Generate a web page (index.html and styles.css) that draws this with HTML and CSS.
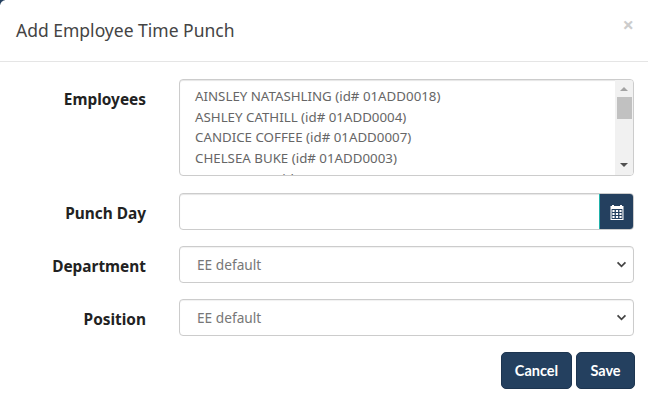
FILE: index.html
```html
<!DOCTYPE html>
<html lang="en">

<head>
    <meta charset="UTF-8">
    <meta name="viewport" content="width=device-width, initial-scale=1.0">
    <title>Add Employee Time Punch</title>
    <link rel="stylesheet" href="styles.css">
</head>

<body>
    <div class="modal">
        <div class="modal-header">
            <h4>Add Employee Time Punch</h4>
            <span class="close">&times;</span>
        </div>
        <form class="modal-body">
            <div class="row row-list">
                <label>Employees</label>
                <div class="list-box">
                    <div class="list-items">
                        <div>AINSLEY NATASHLING (id# 01ADD0018)</div>
                        <div>ASHLEY CATHILL (id# 01ADD0004)</div>
                        <div>CANDICE COFFEE (id# 01ADD0007)</div>
                        <div>CHELSEA BUKE (id# 01ADD0003)</div>
                        <div>JANE DALLEY (id# 01ADD0002)</div>
                    </div>
                    <div class="scrollbar">
                        <span class="arrow-up"></span>
                        <span class="thumb"></span>
                        <span class="arrow-down"></span>
                    </div>
                </div>
            </div>
            <div class="row">
                <label>Punch Day</label>
                <div class="date-group">
                    <div class="date-input"></div>
                    <div class="date-btn">
                        <svg width="14" height="16" viewBox="0 0 14 16">
                            <path fill="#fff" d="M2 1h2v1h6V1h2v1h1.5v14H.5V2H2z"/>
                            <path fill="#24405f" d="M1.6 5h10.8v9.9H1.6z"/>
                            <path fill="#fff" d="M2.4 6h2.2v2H2.4zM5.9 6h2.2v2H5.9zM9.4 6h2.2v2H9.4zM2.4 9h2.2v2H2.4zM5.9 9h2.2v2H5.9zM9.4 9h2.2v2H9.4zM2.4 12h2.2v2H2.4zM5.9 12h2.2v2H5.9zM9.4 12h2.2v2H9.4z"/>
                        </svg>
                    </div>
                </div>
            </div>
            <div class="row">
                <label>Department</label>
                <div class="select-box">
                    <span>EE default</span>
                    <svg width="11" height="7" viewBox="0 0 12 8"><path fill="none" stroke="#444" stroke-width="2" d="M1.5 1.5 6 6l4.5-4.5"/></svg>
                </div>
            </div>
            <div class="row">
                <label>Position</label>
                <div class="select-box">
                    <span>EE default</span>
                    <svg width="11" height="7" viewBox="0 0 12 8"><path fill="none" stroke="#444" stroke-width="2" d="M1.5 1.5 6 6l4.5-4.5"/></svg>
                </div>
            </div>
            <div class="actions">
                <button type="button" class="btn-cancel">Cancel</button>
                <button type="button" class="btn-save">Save</button>
            </div>
        </form>
    </div>
</body>

</html>
```

FILE: styles.css
```css
html,
body {
    height: 100%;
}

body {
    margin: 0;
    padding: 0;
    background: linear-gradient(#24405f, #24405f) 0 0 / 5px 5px no-repeat #fff;
    font-family: "Noto Sans", Arial, sans-serif;
    overflow: hidden;
}

.modal {
    width: 648px;
    height: 418px;
    background: #ffffff;
    border-top-left-radius: 6px;
    box-sizing: border-box;
}

.modal-header {
    height: 62px;
    box-sizing: border-box;
    border-bottom: 1px solid #e5e5e5;
    padding: 0 16px;
    display: flex;
    justify-content: space-between;
    align-items: flex-start;
}

.modal-header h4 {
    margin: 18px 0 0;
    font-size: 17.5px;
    line-height: 24px;
    font-weight: 400;
    color: #444;
}

.close {
    margin: 14px -2px 0 0;
    font-size: 20px;
    line-height: 22px;
    font-weight: 700;
    color: #ccc;
}

.modal-body {
    padding: 17px 14px 0 0;
    display: flex;
    flex-direction: column;
    gap: 16px;
}

.row {
    display: flex;
    height: 37px;
}

.row-list {
    height: 97px;
    margin-bottom: 1px;
}

.row label {
    width: 146px;
    margin-right: 33px;
    text-align: right;
    font-size: 15.4px;
    line-height: 41px;
    font-weight: 700;
    color: #222;
}

.row-list label {
    line-height: 41px;
}

.list-box {
    flex: 1;
    display: flex;
    border: 1px solid #ccc;
    border-radius: 4px;
    box-shadow: inset 0 1px 1px rgba(0, 0, 0, 0.1);
    overflow: hidden;
}

.list-items {
    flex: 1;
    padding: 6px 15px 0;
    font-size: 13.3px;
    line-height: 20.7px;
    color: #666;
    white-space: nowrap;
    overflow: hidden;
}

.scrollbar {
    width: 18px;
    background: #f1f1f1;
    display: flex;
    flex-direction: column;
    align-items: center;
}

.arrow-up {
    margin-top: 7px;
    border: 4px solid transparent;
    border-top: 0;
    border-bottom: 4px solid #a3a3a3;
}

.thumb {
    width: 15px;
    height: 22px;
    margin-top: 6px;
    background: #c1c1c1;
}

.arrow-down {
    margin-top: auto;
    margin-bottom: 8px;
    border: 4px solid transparent;
    border-bottom: 0;
    border-top: 4px solid #505050;
}

.date-group {
    flex: 1;
    display: flex;
    border: 1px solid #ccc;
    border-radius: 4px;
    box-shadow: inset 0 1px 1px rgba(0, 0, 0, 0.1);
    overflow: hidden;
}

.date-input {
    flex: 1;
}

.date-btn {
    width: 34px;
    background: #24405f;
    border-left: 1px solid #20b2aa;
    box-sizing: border-box;
    display: flex;
    align-items: center;
    justify-content: center;
}

.select-box {
    flex: 1;
    display: flex;
    align-items: center;
    justify-content: space-between;
    padding: 0 6px 0 17px;
    border: 1px solid #ccc;
    border-radius: 4px;
    box-shadow: inset 0 1px 1px rgba(0, 0, 0, 0.06);
    font-size: 13.7px;
    color: #777;
}

.actions {
    display: flex;
    justify-content: flex-end;
    gap: 4px;
    margin-right: -1px;
}

button {
    height: 37px;
    padding: 0;
    background-color: #24405f;
    color: #fff;
    border: 1px solid #1d3550;
    border-radius: 5px;
    font-family: Lato, Arial, sans-serif;
    font-size: 14.5px;
    font-weight: 700;
}

.btn-cancel {
    width: 71px;
}

.btn-save {
    width: 59px;
}
```
